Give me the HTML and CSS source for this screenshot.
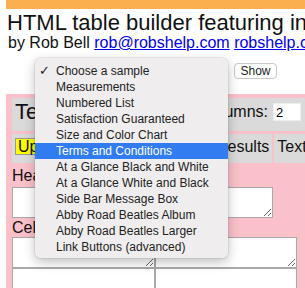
FILE: index.html
```html
<!DOCTYPE html>
<html lang="en">
<head>
    <meta charset="UTF-8">
    <meta name="viewport" content="width=device-width, initial-scale=1.0">
    <title>HTML table builder</title>
    <link rel="stylesheet" href="styles.css">
</head>
<body>
    <div class="topbar"></div>
    <h1 class="title">HTML table builder featuring inline styles</h1>
    <p class="byline">by Rob Bell <a href="#">rob@robshelp.com</a> <a href="#">robshelp.com</a></p>

    <form class="sample-form">
        <select class="sample-select">
            <option>Choose a sample</option>
        </select>
        <button type="button" class="show-btn">Show</button>
    </form>

    <!-- open sample list -->
    <ul class="sample-menu">
        <li class="checked">Choose a sample</li>
        <li>Measurements</li>
        <li>Numbered List</li>
        <li>Satisfaction Guaranteed</li>
        <li>Size and Color Chart</li>
        <li class="active">Terms and Conditions</li>
        <li>At a Glance Black and White</li>
        <li>At a Glance White and Black</li>
        <li>Side Bar Message Box</li>
        <li>Abby Road Beatles Album</li>
        <li>Abby Road Beatles Larger</li>
        <li>Link Buttons (advanced)</li>
    </ul>

    <div class="builder">
        <div class="builder-head">
            <h2>Template</h2>
            <label class="cols">Columns: <input type="text" value="2"></label>
        </div>

        <div class="tabs">
            <div class="tab tab-update"><button type="button" class="update-btn">Update</button></div>
            <div class="tab">Results</div>
            <div class="tab tab-last">Text</div>
        </div>

        <label class="field-label" for="heading">Heading</label>
        <textarea id="heading" class="heading-box"></textarea>

        <label class="field-label cells-label">Cells</label>
        <div class="cells">
            <textarea></textarea>
            <textarea></textarea>
            <textarea></textarea>
            <textarea></textarea>
        </div>
    </div>
</body>
</html>
```

FILE: styles.css
```css
html, body {
    overflow: hidden;
}
body {
    margin: 0 0 0 6px;
    font-family: "Liberation Sans", Arial, sans-serif;
    color: #111;
}
.topbar {
    height: 9px;
    background-color: #fcaf4f;
}
.title {
    margin: 1px 0 0;
    padding-left: 1px;
    font-size: 22px;
    font-weight: normal;
    line-height: 25px;
    white-space: nowrap;
}
.byline {
    margin: 0;
    padding-left: 2px;
    font-size: 16px;
    line-height: 15px;
    white-space: nowrap;
}
.byline a {
    color: #0000ee;
}
.sample-form {
    display: flex;
    gap: 6px;
    margin-top: 13px;
    padding-left: 29px;
    height: 16px;
}
.sample-select {
    width: 193px;
    height: 16px;
    font-size: 12px;
}
.show-btn {
    width: 43px;
    height: 16px;
    padding: 0;
    font-family: "Liberation Sans", Arial, sans-serif;
    font-size: 12px;
    color: #222;
    background-color: #fff;
    border: 1px solid #c8c8c8;
    border-radius: 4px;
}
.sample-menu {
    position: absolute;
    left: 35px;
    top: 58px;
    z-index: 10;
    width: 193px;
    height: 200px;
    box-sizing: border-box;
    margin: 0;
    padding: 5px 0 3px;
    list-style: none;
    background-color: #efeded;
    border-radius: 5px;
    box-shadow: 0 0 0 0.5px rgba(0, 0, 0, 0.12), 0 4px 12px rgba(0, 0, 0, 0.25);
    font-size: 12px;
    color: #222;
}
.sample-menu li {
    position: relative;
    height: 16px;
    line-height: 16px;
    padding-left: 21px;
    white-space: nowrap;
}
.sample-menu li.checked::before {
    content: "\2713";
    position: absolute;
    left: 4px;
    font-family: "DejaVu Sans", sans-serif;
    font-size: 13px;
    font-weight: bold;
}
.sample-menu li.active {
    background-color: #307cf0;
    color: #fff;
}
.builder {
    margin-top: 15px;
    padding: 4px 0 40px 6px;
    background-color: #fbc1cb;
}
.builder-head {
    display: flex;
    justify-content: space-between;
    align-items: flex-start;
    height: 33px;
    box-sizing: border-box;
    padding: 0 4px 0 3px;
    background-color: #dadada;
}
.builder-head h2 {
    margin: 3px 0 0;
    font-size: 22px;
    font-weight: normal;
    line-height: 22px;
}
.cols {
    display: flex;
    gap: 5px;
    margin-top: 5px;
    font-size: 16px;
    line-height: 18px;
}
.cols input {
    width: 28px;
    height: 18px;
    box-sizing: border-box;
    padding: 0 2px;
    border: 1px solid #eee;
    font-family: "Liberation Sans", Arial, sans-serif;
    font-size: 13px;
}
.tabs {
    display: flex;
    gap: 2px;
    margin-top: 3px;
    height: 29px;
}
.tab {
    padding: 4px 3px 0;
    background-color: #dadada;
    font-size: 16px;
    line-height: 18px;
    white-space: nowrap;
}
.tab-update {
    width: 199px;
    box-sizing: border-box;
}
.tab-last {
    flex: 1;
    overflow: hidden;
}
.update-btn {
    height: 17px;
    padding: 0 2px;
    font-family: "Liberation Sans", Arial, sans-serif;
    font-size: 16px;
    line-height: 15px;
    color: #111;
    background-color: #ff0;
    border: 1px solid #999;
}
.field-label {
    display: block;
    margin-top: 4px;
    font-size: 16px;
    line-height: 18px;
}
.cells-label {
    margin-top: 1px;
}
textarea {
    margin: 0;
    box-sizing: border-box;
    border: 1px solid #a9a9a9;
    background-color: #fff;
}
.heading-box {
    display: block;
    width: 261px;
    height: 31px;
    margin-top: 2px;
}
.cells {
    display: grid;
    grid-template-columns: 143px 142px;
    grid-auto-rows: 31px;
}
.cells textarea {
    display: block;
    width: 100%;
    height: 100%;
}
```
